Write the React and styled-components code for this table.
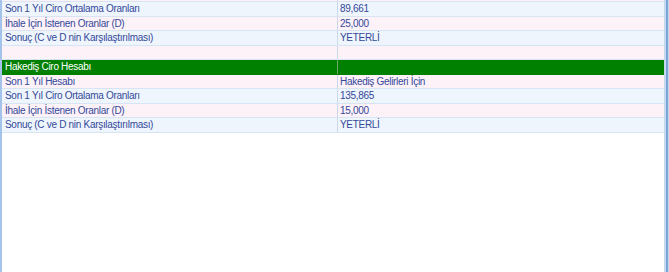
import React from "react";
import styled, { createGlobalStyle } from "styled-components";

const GlobalStyle = createGlobalStyle`
  html, body {
    margin: 0;
    padding: 0;
    background: #ffffff;
  }
  #root {
    height: 272px;
  }
`;

const rows = [
  { type: "pink", label: "", value: "" },
  { type: "blue", label: "Son 1 Yıl Ciro Ortalama Oranları", value: "89,661" },
  { type: "pink", label: "İhale İçin İstenen Oranlar (D)", value: "25,000" },
  { type: "blue", label: "Sonuç (C ve D nin Karşılaştırılması)", value: "YETERLİ" },
  { type: "pink", label: "", value: "" },
  { type: "green", label: "Hakediş Ciro Hesabı", value: "" },
  { type: "pink", label: "Son 1 Yıl Hesabı", value: "Hakediş Gelirleri İçin" },
  { type: "blue", label: "Son 1 Yıl Ciro Ortalama Oranları", value: "135,865" },
  { type: "pink", label: "İhale İçin İstenen Oranlar (D)", value: "15,000" },
  { type: "blue", label: "Sonuç (C ve D nin Karşılaştırılması)", value: "YETERLİ" },
];

const backgrounds = {
  blue: "#eef5fd",
  pink: "#fcf2f8",
  green: "#008000",
};

const App = () => {
  return (
    <>
      <GlobalStyle />
      <Page>
        <Grid>
          <Table>
            {rows.map((row, i) => (
              <Row key={i} $type={row.type}>
                <LabelCell $type={row.type}>{row.label}</LabelCell>
                <ValueCell $type={row.type}>{row.value}</ValueCell>
              </Row>
            ))}
          </Table>
        </Grid>
        <Frame />
      </Page>
    </>
  );
};

export default App;

const Page = styled.div`
  display: flex;
  height: 272px;
  width: 669px;
`;

const Grid = styled.div`
  flex: 1;
  border-left: 2px solid #a3c3ea;
  background: #ffffff;
  overflow: hidden;
`;

const Table = styled.div`
  margin-top: -12.5px;
  display: flex;
  flex-direction: column;
`;

const Row = styled.div`
  display: grid;
  grid-template-columns: 336px 1fr;
  height: 14.5px;
  box-sizing: border-box;
  background: ${({ $type }) => backgrounds[$type]};
  border-bottom: 1px solid ${({ $type }) => ($type === "green" ? "#008000" : "#d6e4f4")};
  font-family: "Liberation Sans", Arial, sans-serif;
  font-size: 10px;
  letter-spacing: -0.3px;
  line-height: 13.5px;
  color: ${({ $type }) => ($type === "green" ? "#ffffff" : "#34489a")};
`;

const LabelCell = styled.div`
  padding-left: 3px;
  border-right: 1px solid ${({ $type }) => ($type === "green" ? "#6aa86a" : "#c9d9eb")};
  white-space: nowrap;
  overflow: hidden;
`;

const ValueCell = styled.div`
  padding-left: 2px;
  white-space: nowrap;
  overflow: hidden;
`;

const Frame = styled.div`
  width: 2px;
  background: #7aa3d6;
  border-left: 2px solid #c4d8f0;
  border-right: 1px solid #c4d8f0;
`;
